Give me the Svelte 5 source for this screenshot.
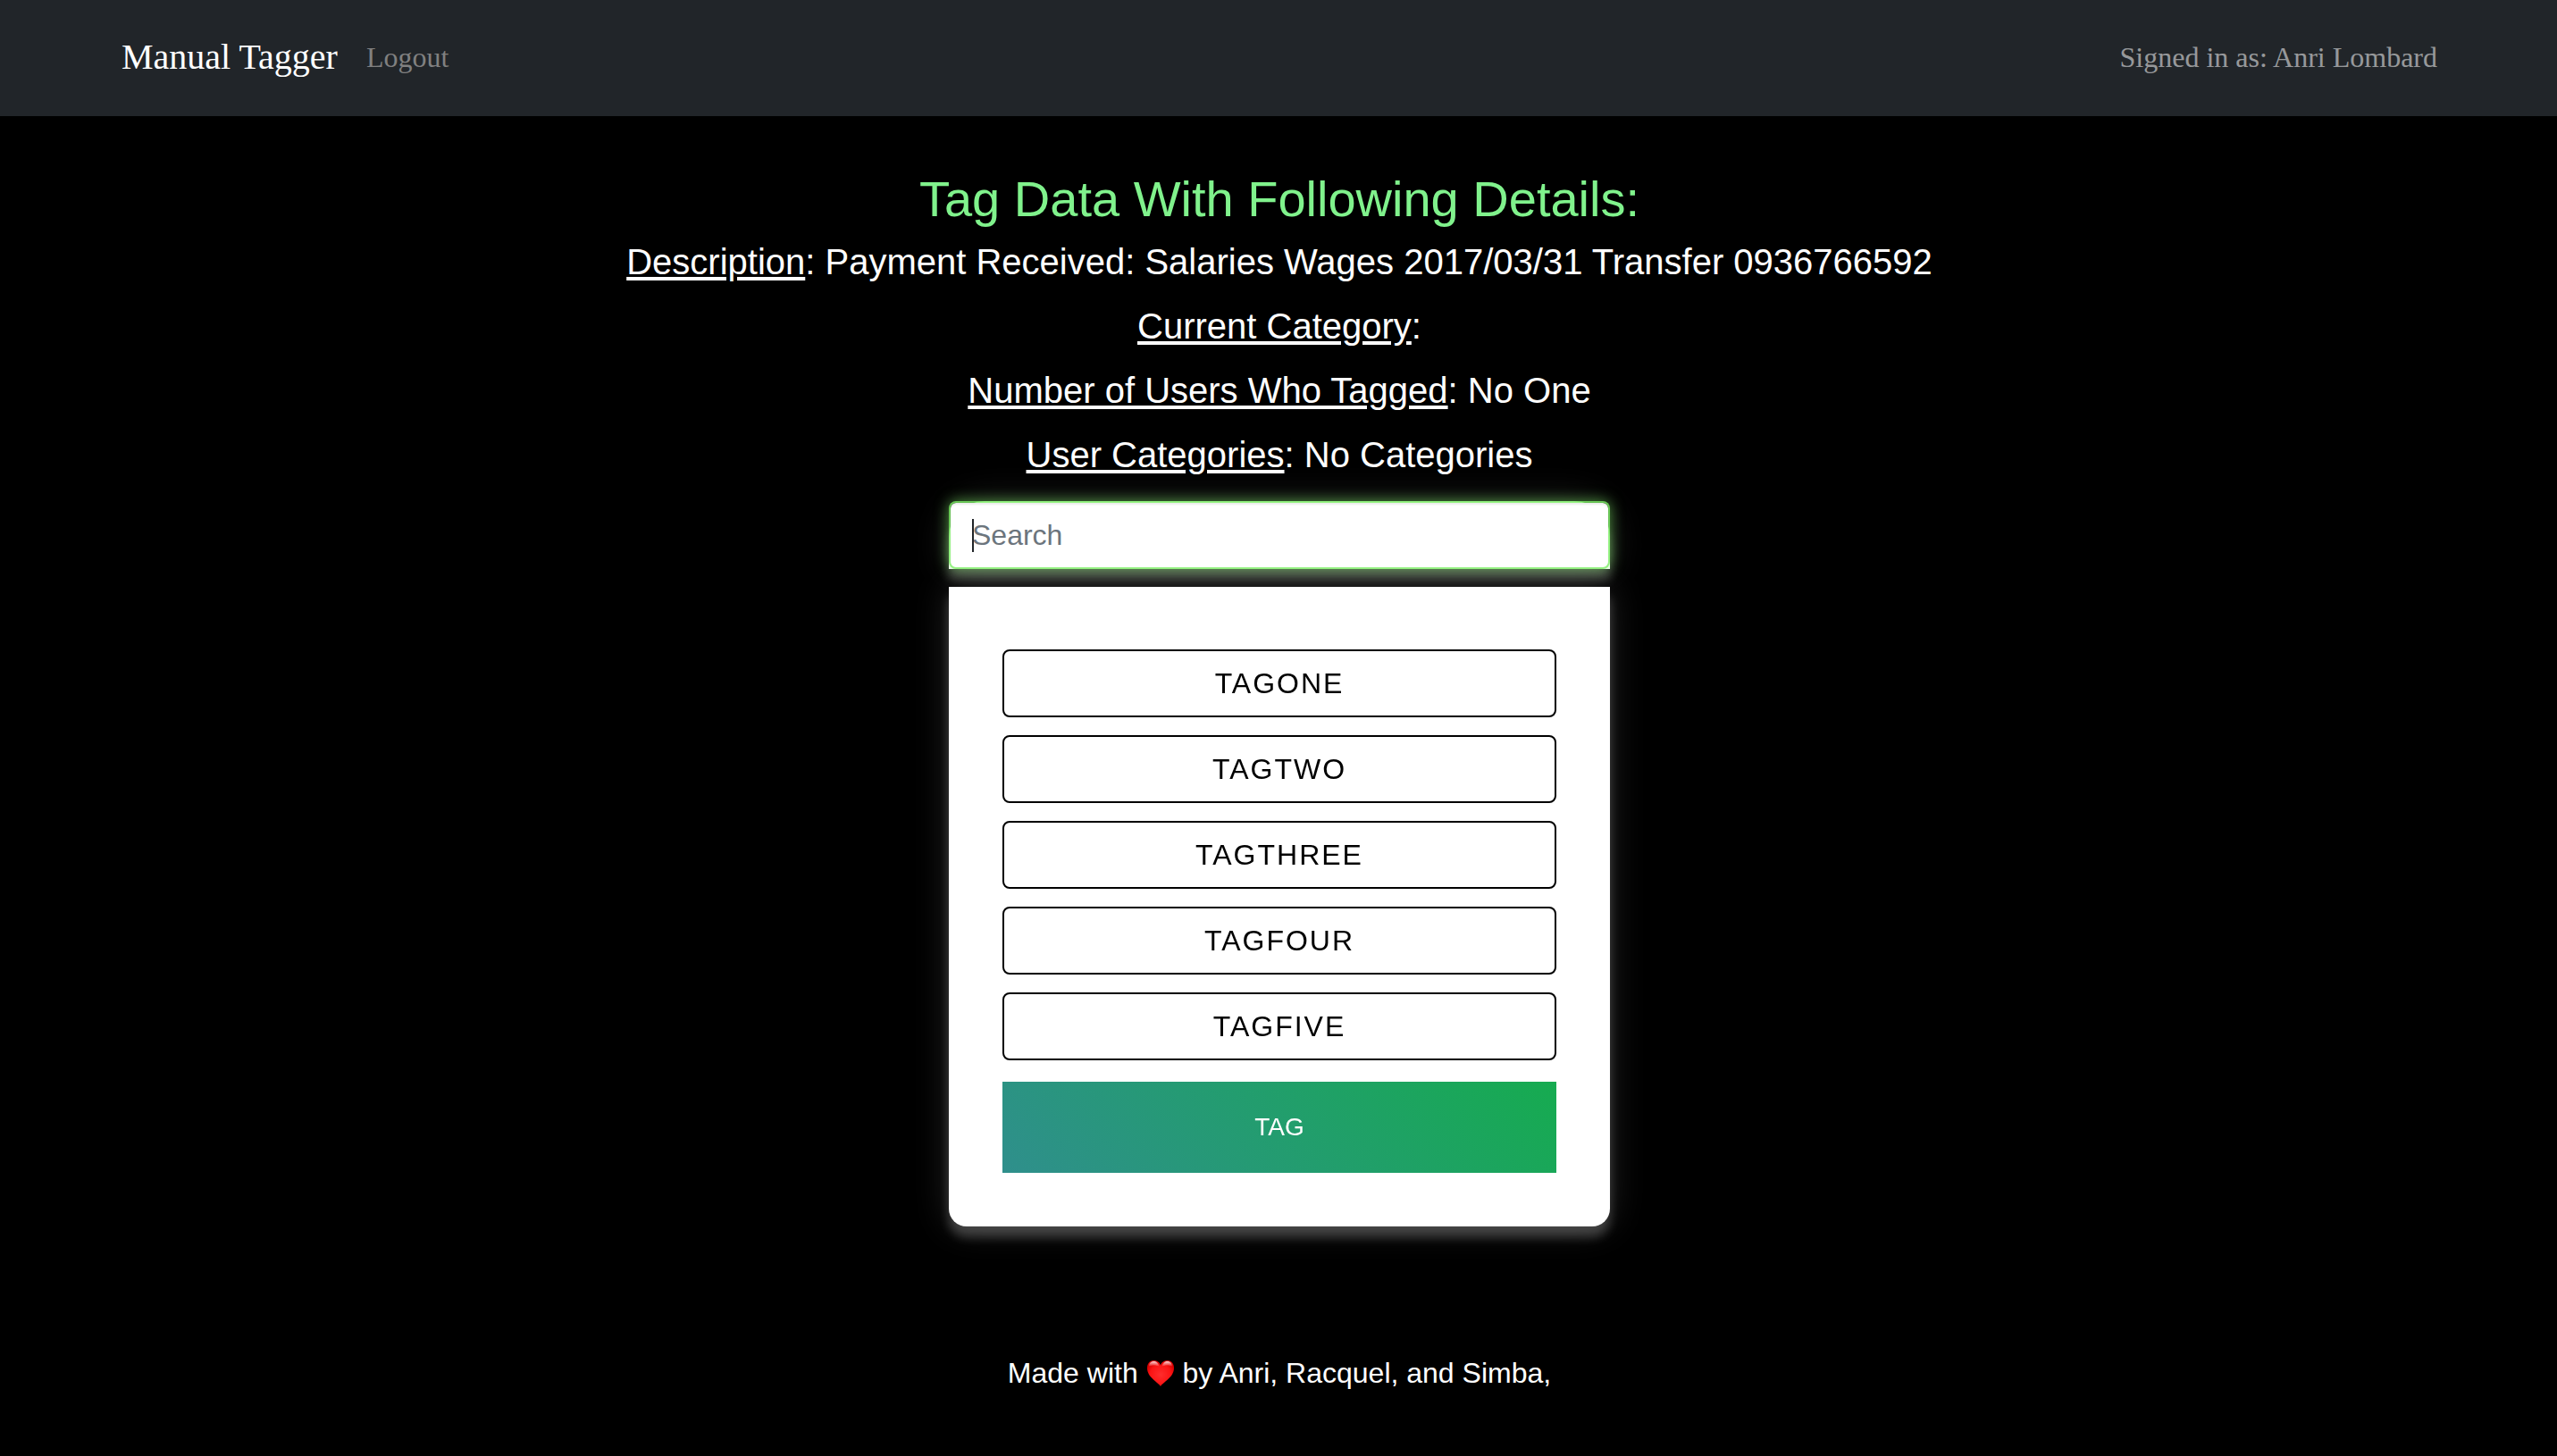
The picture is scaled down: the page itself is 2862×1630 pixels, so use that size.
<script>
  import { onMount } from 'svelte';

  const details = [
    { label: 'Description', value: 'Payment Received: Salaries Wages 2017/03/31 Transfer 0936766592' },
    { label: 'Current Category', value: '' },
    { label: 'Number of Users Who Tagged', value: 'No One' },
    { label: 'User Categories', value: 'No Categories' },
  ];
  const tags = ['TAGONE', 'TAGTWO', 'TAGTHREE', 'TAGFOUR', 'TAGFIVE'];

  let query = $state('');
  let selected = $state('');
  let searchBox;

  const shown = $derived(tags.filter((t) => t.includes(query.trim().toUpperCase())));

  onMount(() => searchBox.focus());
</script>

<div class="page">
  <nav class="navbar">
    <a class="brand" href="#home">Manual Tagger</a>
    <a class="logout" href="#logout">Logout</a>
    <span class="signed">Signed in as: Anri Lombard</span>
  </nav>

  <main>
    <h1>Tag Data With Following Details:</h1>
    <div class="details">
      {#each details as d}
        <p><u>{d.label}</u>: {d.value}</p>
      {/each}
    </div>

    <div class="search" class:empty={query === ''}>
      <input type="text" placeholder="Search" aria-label="Search" bind:value={query} bind:this={searchBox} />
    </div>

    <section class="card">
      <div class="tags">
        {#each shown as tag}
          <button type="button" class="tag" aria-pressed={selected === tag} onclick={() => (selected = tag)}>{tag}</button>
        {/each}
      </div>
      <button type="button" class="submit">TAG</button>
    </section>
  </main>

  <footer>
    Made with
    <svg class="heart" viewBox="0 0 32 32" role="img" aria-label="love">
      <defs>
        <radialGradient id="heart-fill" cx="50%" cy="55%" r="55%">
          <stop offset="0" stop-color="#ff2d2d" />
          <stop offset=".7" stop-color="#fb1414" />
          <stop offset="1" stop-color="#dc0000" />
        </radialGradient>
        <linearGradient id="heart-shine" x1="0" y1="0" x2="0" y2="1">
          <stop offset="0" stop-color="#fff" stop-opacity=".85" />
          <stop offset="1" stop-color="#fff" stop-opacity="0" />
        </linearGradient>
      </defs>
      <path
        fill="url(#heart-fill)"
        d="M16 31C13 26 1 21 1 10.500C1 5.500 4 2 8.500 2C12 2 15 4 16 7.500C17 4 20 2 23.500 2C28 2 31 5.500 31 10.500C31 21 19 26 16 31Z"
      />
      <path fill="url(#heart-shine)" d="M3 9C3 5 5.500 3 8.500 3C11.500 3 13.500 5 14.500 9C11 7 6 7 3 9Z" />
      <path fill="url(#heart-shine)" d="M29 9C29 5 26.500 3 23.500 3C20.500 3 18.500 5 17.500 9C21 7 26 7 29 9Z" />
    </svg>
    by Anri, Racquel, and Simba,
  </footer>
</div>

<style>
  :global(body) {
    margin: 0;
    background: #000;
  }

  .page {
    min-height: 100vh;
    background: #000;
    color: #fff;
    font-family: 'Liberation Sans', Helvetica, Arial, sans-serif;
    font-size: 32px;
    line-height: 48px;
  }

  .navbar {
    display: flex;
    align-items: center;
    box-sizing: border-box;
    min-height: 130px;
    padding: 14px 134px 16px 136px;
    background: #212529;
    font-family: 'Liberation Serif', 'Times New Roman', serif;
  }

  .brand {
    margin-right: 32px;
    color: #fff;
    font-size: 40px;
    text-decoration: none;
  }

  .logout {
    color: #808080;
    text-decoration: none;
  }

  .signed {
    margin-left: auto;
    color: rgba(255, 255, 255, 0.55);
  }

  main {
    display: flex;
    flex-direction: column;
    align-items: center;
    padding: 59px 22px 0 24px;
  }

  h1 {
    margin: 0;
    color: #80f28c;
    font-size: 56px;
    font-weight: 400;
    line-height: 68px;
    text-align: center;
  }

  .details {
    display: flex;
    flex-direction: column;
    gap: 24px;
    padding: 12px 0 28px;
    font-size: 40px;
    text-align: center;
  }

  .details p {
    margin: 0;
  }

  .details u {
    text-decoration-thickness: 4px;
    text-underline-offset: 3px;
  }

  .search,
  .card {
    box-sizing: border-box;
    width: min(100%, 740px);
    background: #fff;
    box-shadow:
      0 12px 12px rgba(255, 255, 255, 0.22),
      0 0 40px rgba(255, 255, 255, 0.14);
  }

  .search {
    position: relative;
    display: flex;
    margin-bottom: 20px;
    border-radius: 40px 40px 0 0;
  }

  /* Tall steady caret while the box is empty; the native one takes over on typing. */
  .search.empty:focus-within::after {
    content: '';
    position: absolute;
    top: 20px;
    left: 26px;
    width: 2px;
    height: 37px;
    background: #212529;
  }

  .search.empty input {
    caret-color: transparent;
  }

  input {
    box-sizing: border-box;
    width: 100%;
    height: 76px;
    padding: 12px 24px;
    border: 2px solid rgba(126, 239, 104, 0.8);
    border-radius: 8px;
    outline: none;
    background: #fff;
    background-clip: padding-box;
    box-shadow:
      inset 0 2px 2px rgba(0, 0, 0, 0.075),
      0 0 16px rgba(126, 239, 104, 0.6);
    color: #212529;
    font: inherit;
  }

  input::placeholder {
    color: #6c757d;
    opacity: 1;
  }

  .card {
    position: relative;
    padding: 70px 60px 60px;
    border-radius: 0 0 20px 20px;
  }

  .tags {
    display: flex;
    flex-direction: column;
    gap: 20px;
    margin-bottom: 24px;
  }

  .tag {
    height: 76px;
    padding: 0 24px;
    border: 2px solid #000;
    border-radius: 8px;
    background: #fff;
    color: #000;
    font: inherit;
    letter-spacing: 2px;
    cursor: pointer;
  }

  .submit {
    width: 100%;
    height: 102px;
    border: 0;
    background: linear-gradient(45deg, #2f8f8c, #16ab50);
    color: #fff;
    font: inherit;
    font-size: 28px;
    cursor: pointer;
  }

  footer {
    padding: 140px 22px 69px 24px;
    text-align: center;
  }

  .heart {
    width: 32px;
    height: 32px;
    vertical-align: -5px;
  }
</style>
